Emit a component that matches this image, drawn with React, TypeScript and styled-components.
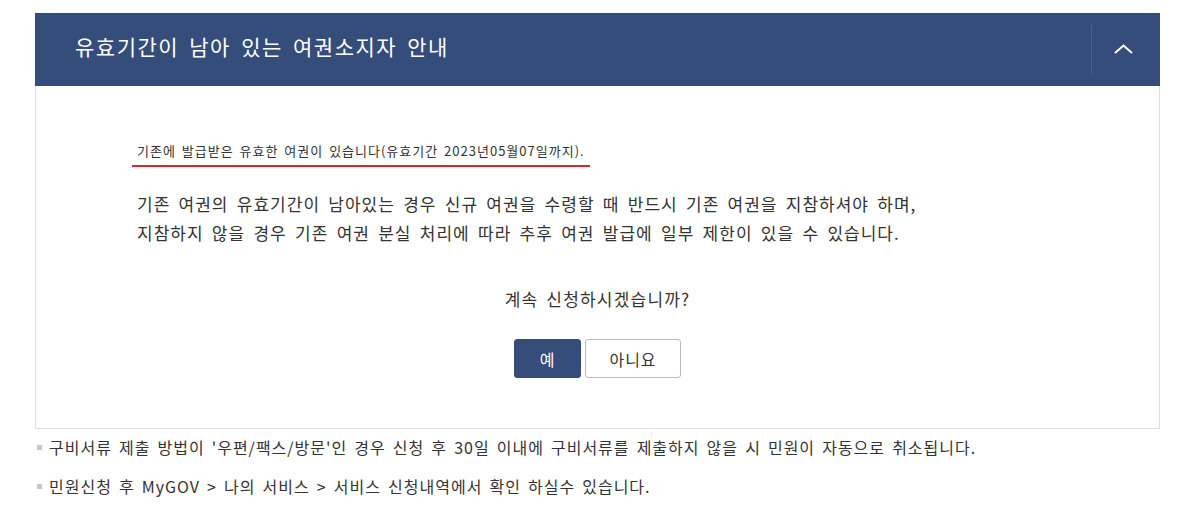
import React from "react";
import styled, { createGlobalStyle } from "styled-components";

const GlobalStyle = createGlobalStyle`
  body {
    margin: 0;
    background: #fff;
    font-family: "Noto Sans CJK KR", "Noto Sans", sans-serif;
    color: #333;
  }
`;

const Page = styled.div`
  padding: 13px 31px 0 35px;
`;

const Panel = styled.section`
  width: 1125px;
`;

const Header = styled.header`
  display: flex;
  align-items: center;
  height: 73px;
  background: #344d7a;
  color: #fff;
`;

const Title = styled.h2`
  flex: 1;
  margin: 0 0 7px;
  padding-left: 40px;
  font-size: 21px;
  font-weight: 400;
  letter-spacing: 1.5px;
  word-spacing: 4px;
`;

const ToggleButton = styled.button`
  display: flex;
  align-items: center;
  justify-content: center;
  width: 69px;
  height: 50px;
  padding: 0 6px 2px 0;
  border: 0;
  border-left: 1px solid #4a6190;
  background: transparent;
  cursor: pointer;
`;

const Body = styled.div`
  border: 1px solid #ddd;
  border-top: 0;
  padding: 51px 0 50px 96px;
`;

const Notice = styled.p`
  display: inline-block;
  margin: 0;
  padding: 0 5px 4px;
  font-size: 13px;
  line-height: 20px;
  letter-spacing: 1px;
  word-spacing: 2px;
  border-bottom: 2px solid #d7262e;
`;

const Description = styled.p`
  margin: 22px 0 0 5px;
  font-size: 17px;
  line-height: 29px;
  letter-spacing: 1px;
  word-spacing: 3.5px;
`;

const Question = styled.p`
  margin: 40px 0 0 -96px;
  text-align: center;
  font-size: 17px;
  line-height: 24px;
  letter-spacing: 1.2px;
  word-spacing: 3px;
`;

const Actions = styled.div`
  display: flex;
  justify-content: center;
  gap: 4px;
  margin: 28px 0 0 -96px;
`;

const ActionButton = styled.button<{ $primary?: boolean }>`
  height: 39px;
  min-width: ${({ $primary }) => ($primary ? "67px" : "96px")};
  border-radius: 3px;
  border: 1px solid ${({ $primary }) => ($primary ? "#344d7a" : "#bbb")};
  background: ${({ $primary }) => ($primary ? "#344d7a" : "#fff")};
  color: ${({ $primary }) => ($primary ? "#fff" : "#333")};
  font-family: inherit;
  font-size: 16px;
  letter-spacing: 1px;
  cursor: pointer;
`;

const InfoList = styled.ul`
  list-style: none;
  margin: 6px 0 0;
  padding: 0;
`;

const InfoItem = styled.li`
  position: relative;
  padding-left: 14px;
  font-size: 16px;
  line-height: 24px;
  letter-spacing: 1px;
  word-spacing: 2.5px;
  color: #333;

  & + & {
    margin-top: 15px;
  }

  &::before {
    content: "";
    position: absolute;
    left: 2px;
    top: 10px;
    width: 5px;
    height: 5px;
    background: #c8c8c8;
  }
`;

const App: React.FC = () => {
  return (
    <Page>
      <GlobalStyle />
      <Panel>
        <Header>
          <Title>유효기간이 남아 있는 여권소지자 안내</Title>
          <ToggleButton aria-label="접기">
            <svg width="19" height="10" viewBox="0 0 19 10" fill="none">
              <path d="M1 9L9.5 1.5L18 9" stroke="#fff" strokeWidth="2" />
            </svg>
          </ToggleButton>
        </Header>
        <Body>
          <Notice>기존에 발급받은 유효한 여권이 있습니다(유효기간 2023년05월07일까지).</Notice>
          <Description>
            기존 여권의 유효기간이 남아있는 경우 신규 여권을 수령할 때 반드시 기존 여권을 지참하셔야 하며,
            <br />
            지참하지 않을 경우 기존 여권 분실 처리에 따라 추후 여권 발급에 일부 제한이 있을 수 있습니다.
          </Description>
          <Question>계속 신청하시겠습니까?</Question>
          <Actions>
            <ActionButton $primary>예</ActionButton>
            <ActionButton>아니요</ActionButton>
          </Actions>
        </Body>
      </Panel>
      <InfoList>
        <InfoItem>
          구비서류 제출 방법이 '우편/팩스/방문'인 경우 신청 후 30일 이내에 구비서류를 제출하지 않을 시 민원이 자동으로 취소됩니다.
        </InfoItem>
        <InfoItem>민원신청 후 MyGOV &gt; 나의 서비스 &gt; 서비스 신청내역에서 확인 하실수 있습니다.</InfoItem>
      </InfoList>
    </Page>
  );
};

export default App;
